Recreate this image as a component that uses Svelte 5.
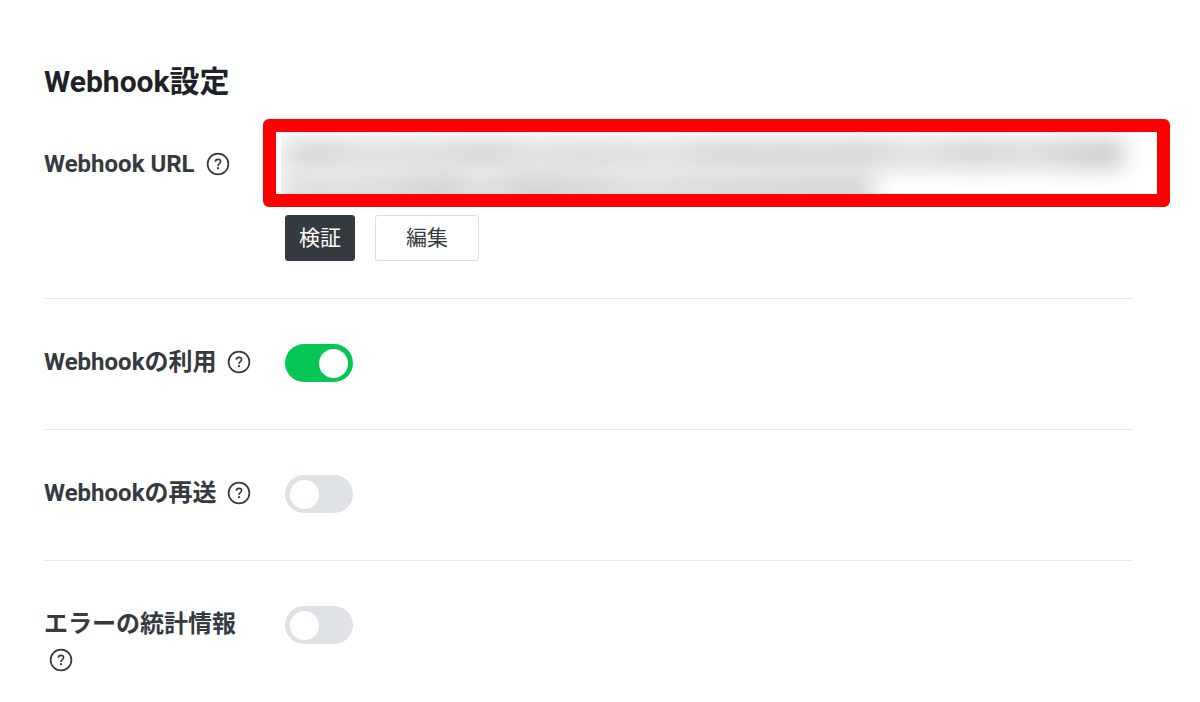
<script>
  let useWebhook = $state(true);
  let redeliver = $state(false);
  let errorStats = $state(false);
</script>

{#snippet help(name)}
  <button class="help" type="button" aria-label={name}>
    <svg viewBox="0 0 24 24" width="24" height="24" fill="none" stroke="currentColor" aria-hidden="true">
      <circle cx="12" cy="12" r="10.4" stroke-width="1.7" />
      <path d="M9.3 9.8C9.4 8.3 10.4 7.4 12 7.4C13.6 7.4 14.6 8.3 14.6 9.6C14.6 11.6 12 11.8 12 13.9" stroke-width="1.6" />
      <circle cx="12" cy="16.2" r="1.1" fill="currentColor" stroke="none" />
    </svg>
  </button>
{/snippet}

<main>
  <h2>Webhook設定</h2>

  <section class="row first">
    <div class="label"><span>Webhook URL</span> {@render help('Webhook URL')}</div>
    <div class="content">
      <div class="url">
        <div class="masked" aria-hidden="true">
          <i class="line one"></i>
          <i class="line two"></i>
        </div>
        <div class="frame"></div>
      </div>
      <div class="actions">
        <button class="btn dark" type="button">検証</button>
        <button class="btn light" type="button">編集</button>
      </div>
    </div>
  </section>

  <section class="row">
    <div class="label"><label for="use">Webhookの利用</label> {@render help('Webhookの利用')}</div>
    <div class="content"><input id="use" type="checkbox" role="switch" bind:checked={useWebhook} /></div>
  </section>

  <section class="row">
    <div class="label"><label for="redeliver">Webhookの再送</label> {@render help('Webhookの再送')}</div>
    <div class="content"><input id="redeliver" type="checkbox" role="switch" bind:checked={redeliver} /></div>
  </section>

  <section class="row">
    <div class="label"><label for="stats">エラーの統計情報</label> {@render help('エラーの統計情報')}</div>
    <div class="content"><input id="stats" type="checkbox" role="switch" bind:checked={errorStats} /></div>
  </section>
</main>

<style>
  :global(body) {
    margin: 0;
    background: #fff;
  }

  main {
    padding: 60px 67px 0 44px;
    color: #353a40;
    font-family: Roboto, "Noto Sans CJK JP", sans-serif;
    font-size: 24px;
    line-height: 36px;
  }

  h2 {
    margin: 0;
    color: #1e2125;
    font-size: 30px;
    font-weight: 700;
    line-height: 44px;
  }

  .row {
    display: grid;
    grid-template-columns: 216px minmax(0, 1fr);
    column-gap: 25px;
    padding: 45px 0 47px;
    border-bottom: 1px solid #e8e9ea;
  }

  .row.first {
    padding: 42px 0 37px;
  }

  .row:last-child {
    border-bottom: 0;
    padding-bottom: 0;
  }

  .label {
    font-weight: 700;
  }

  .help {
    display: inline-flex;
    margin: 0 0 0 5px;
    padding: 0;
    border: 0;
    background: none;
    color: #353a40;
    vertical-align: -4px;
    cursor: pointer;
  }

  .content {
    display: flex;
    flex-direction: column;
    align-items: flex-start;
  }

  .url {
    position: relative;
    align-self: stretch;
    height: 48px;
  }

  .frame {
    position: absolute;
    inset: -27px -37px -13px -22px;
    height: 62px;
    border: 13px solid #f00;
    border-radius: 6px;
  }

  .masked {
    position: absolute;
    inset: -14px -20px 0 -4px;
    overflow: hidden;
  }

  .line {
    display: block;
    height: 30px;
    border-radius: 8px;
    filter: blur(11px);
    opacity: 0.9;
  }

  .line.one {
    margin: 7px 28px 0 0;
    background: linear-gradient(90deg, #d6d8d9, #cdcfd1 4%, #d8dadc 10%, #d4d6d8 20%, #cecfd1 24%, #dadbdd 30%, #d4d5d7 36%, #dadbdc 46%, #d0d1d3 52%, #d2d3d4 65%, #cecfd1 69%, #dadbdc 75%, #cecfd1 82%, #d6d7d9 89%, #c6c7c9 96%);
  }

  .line.two {
    width: 68%;
    height: 48px;
    margin: 0;
    background: linear-gradient(90deg, #dadcde, #d9dadc 17%, #ced0d1 27%, #dddedf 34%, #ced0d1 42%, #dbdcde 60%, #d2d4d6 90%);
  }

  .actions {
    display: flex;
    gap: 20px;
    margin-top: 21px;
  }

  .btn {
    box-sizing: border-box;
    height: 46px;
    border: 1px solid #dcdfe2;
    border-radius: 3px;
    font: 400 21px/32px Roboto, "Noto Sans CJK JP", sans-serif;
    cursor: pointer;
  }

  .btn.dark {
    padding: 0 13px;
    border-color: #353a40;
    background: #353a40;
    color: #fff;
  }

  .btn.light {
    padding: 0 30px;
    background: #fff;
    color: #353a40;
  }

  input {
    appearance: none;
    display: flex;
    align-items: center;
    box-sizing: border-box;
    width: 68px;
    height: 38px;
    margin: 0;
    padding: 0 5px;
    border-radius: 19px;
    background: #dee2e6;
    cursor: pointer;
  }

  input::before {
    content: "";
    width: 29px;
    height: 29px;
    border-radius: 50%;
    background: #fff;
  }

  input:checked {
    justify-content: flex-end;
    background: #06c755;
  }
</style>
